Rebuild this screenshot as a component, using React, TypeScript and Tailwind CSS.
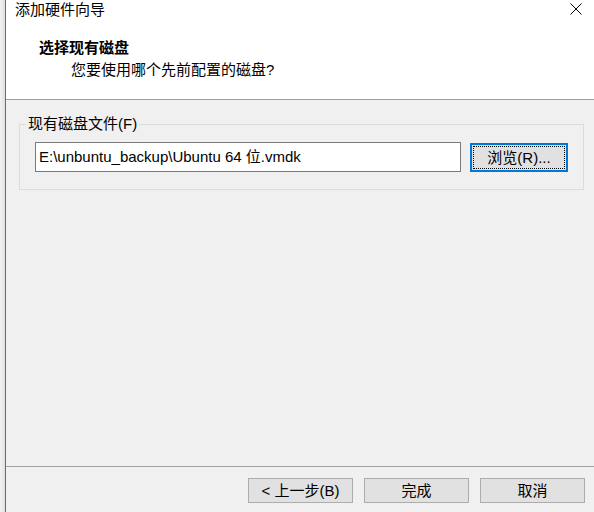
const font = "font-['Liberation_Sans','Noto_Sans_CJK_SC',sans-serif]";

function WinButton({ children, focused = false }: { children: React.ReactNode; focused?: boolean }) {
  if (focused) {
    return (
      <button className="h-[29px] w-[98px] border-2 border-[#0078d7] bg-[#e1e1e1] p-px">
        <div className="flex h-full w-full items-center justify-center border border-dotted border-black text-[15px] leading-none text-black">
          {children}
        </div>
      </button>
    );
  }
  return (
    <button className="flex h-[25px] w-[105px] items-center justify-center border border-[#adadad] bg-[#e1e1e1] text-[15px] leading-none text-black">
      {children}
    </button>
  );
}

export default function App() {
  return (
    <div className={`flex h-[512px] w-[594px] overflow-hidden ${font}`}>
      <div className="w-[6px] bg-gradient-to-r from-[#f2f2f2] to-[#e0e0e0]" />
      <div className="w-px bg-[#6b6b6b]" />
      <div className="flex flex-1 flex-col bg-[#f0f0f0]">
        {/* header */}
        <div className="h-[100px] border-b border-[#a0a0a0] bg-white">
          <div className="flex h-[20px] items-center justify-between pl-[9px] pr-[12px]">
            <span className="text-[15px] leading-[20px] text-black">添加硬件向导</span>
            <svg width="12" height="12" viewBox="0 0 12 12" className="mb-[2px]">
              <path d="M0.5 0.5 L11.5 11.5 M11.5 0.5 L0.5 11.5" stroke="#000" strokeWidth="1" />
            </svg>
          </div>
          <div className="mt-[18px] pl-[33px] text-[15px] font-bold leading-[20px] text-black">选择现有磁盘</div>
          <div className="mt-[2px] pl-[65px] text-[15px] leading-[20px] text-black">您要使用哪个先前配置的磁盘?</div>
        </div>

        {/* body */}
        <div className="flex-1 pl-[13px] pr-[10px] pt-[24px]">
          <div className="relative h-[66px] border border-[#dcdcdc] pl-[15px] pr-[15px] pt-[17px]">
            <span className="absolute -top-[11px] left-[6px] bg-[#f0f0f0] px-[2px] text-[15px] leading-[20px] text-black">
              现有磁盘文件(F)
            </span>
            <div className="flex items-start gap-[9px]">
              <div className="flex h-[30px] w-[426px] items-center border border-[#7a7a7a] bg-white pl-[3px] text-[15px] text-black">
                E:\unbuntu_backup\Ubuntu 64 位.vmdk
              </div>
              <div className="pt-px">
                <WinButton focused>浏览(R)...</WinButton>
              </div>
            </div>
          </div>
        </div>

        {/* footer */}
        <div className="flex h-[46px] justify-end gap-[11px] border-t border-[#a0a0a0] pr-[9px] pt-[11px]">
          <WinButton>&lt; 上一步(B)</WinButton>
          <WinButton>完成</WinButton>
          <WinButton>取消</WinButton>
        </div>
      </div>
    </div>
  );
}
